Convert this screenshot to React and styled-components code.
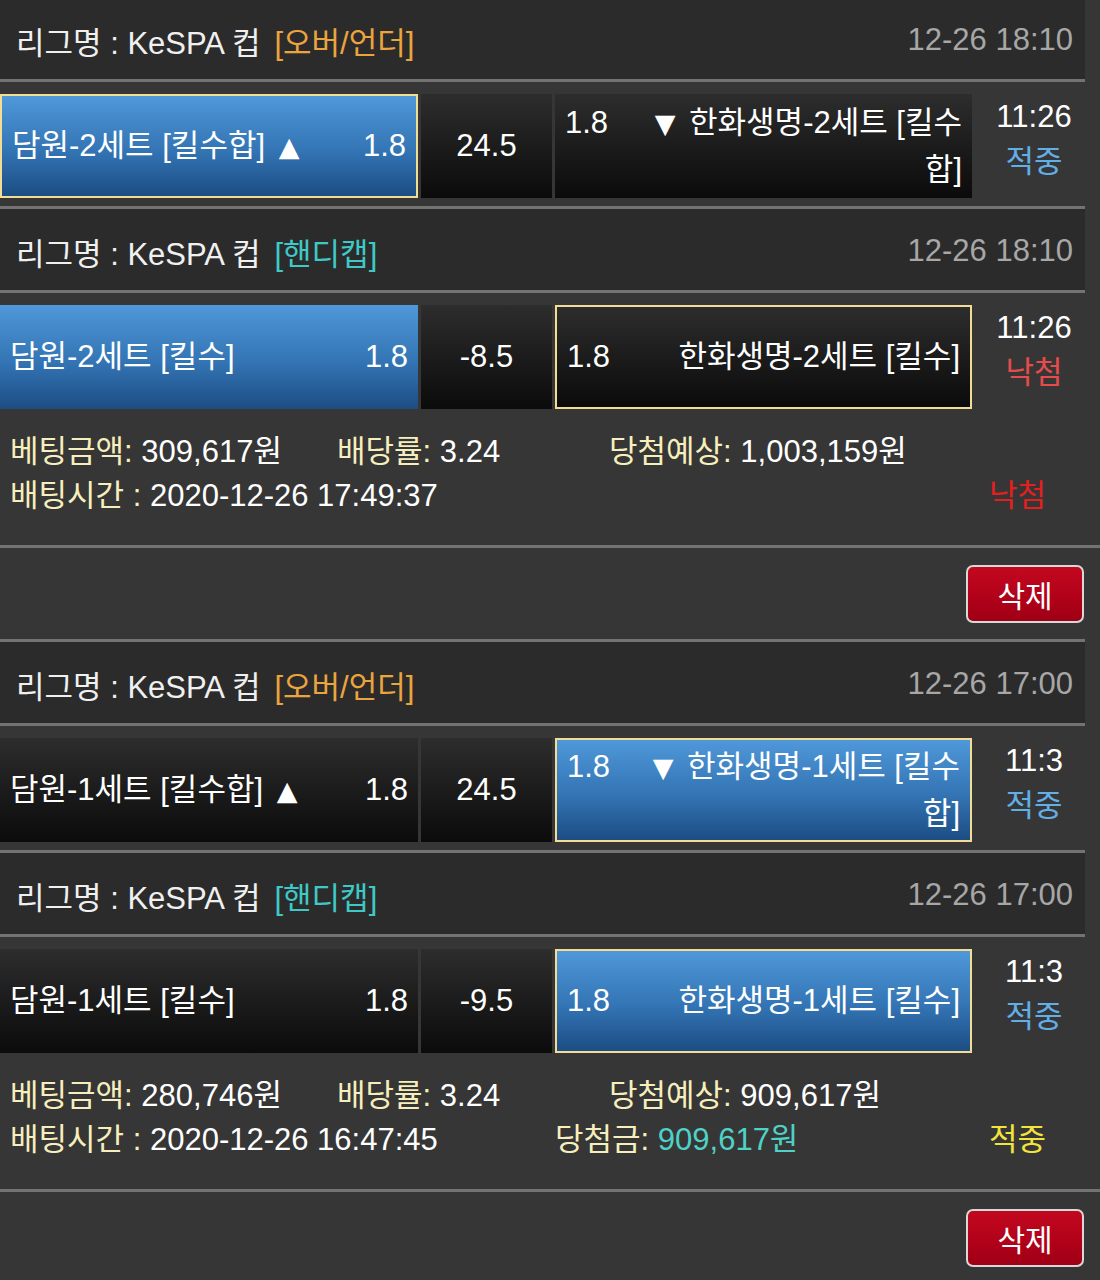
import React from 'react';
import styled, { createGlobalStyle } from 'styled-components';

const GlobalStyle = createGlobalStyle`
  html, body {
    margin: 0;
    padding: 0;
    background: #363636;
  }
  body {
    font-family: "Liberation Sans", "Noto Sans CJK KR", sans-serif;
    color: #f2f2f2;
  }
`

const tones = {
	orange: '#eba43e',
	teal: '#3fc9c6',
	hitBlue: '#62aee6',
	missRed: '#e64c4c',
	yellow: '#f2e43c',
	red: '#e2201f',
	payout: '#4fd2c6',
};

const Page = styled.div`
	width: 1100px;
	margin-top: -5px;
	background: #363636;
	overflow: hidden;
	font-size: 31px;
`

const LeagueHeader = styled.div`
	box-sizing: border-box;
	width: 1085px;
	height: 87px;
	padding: 3px 12px 0 16px;
	display: flex;
	align-items: center;
	justify-content: space-between;
	background: #2b2b2b;
	border-top: 3px solid #737373;
	border-bottom: 3px solid #737373;
	color: #f0f0f0;
	white-space: nowrap;
`

const Market = styled.span`
	margin-left: 14px;
	color: ${(p) => tones[p.$tone]};
`

const GameDate = styled.span`
	color: #a7a7a7;
`

const BetRow = styled.div`
	width: 1085px;
	display: grid;
	grid-template-columns: 418px 131px 417px 1fr;
	column-gap: 3px;
	padding: 12px 0 ${(p) => (p.$last ? '0' : '8px')};
`

const Pick = styled.div`
	box-sizing: border-box;
	height: 104px;
	padding: 0 10px;
	display: flex;
	align-items: center;
	justify-content: ${(p) => (p.$center ? 'center' : 'stretch')};
	border: ${(p) => (p.$picked ? '2px solid #f3dc94' : 'none')};
	background: ${(p) =>
		p.$active
			? 'linear-gradient(180deg, #4f98d9 0%, #3374b4 55%, #1c4d84 100%)'
			: 'linear-gradient(180deg, #2d2d2d 0%, #1a1a1a 55%, #0b0b0b 100%)'};
	line-height: 46px;
	color: #fff;
`

const PickBody = styled.div`
	flex: 1;
	display: flex;
	align-items: flex-start;
	justify-content: space-between;
`

const TeamName = styled.span`
	max-width: 322px;
	text-align: ${(p) => (p.$right ? 'right' : 'left')};
`

const Arrow = styled.span`
	font-family: "DejaVu Sans", sans-serif;
	font-size: 27px;
	margin: ${(p) => (p.$before ? '0 5px 0 0' : '0 0 0 5px')};
`

const Status = styled.div`
	align-self: start;
	padding-left: 8px;
	display: flex;
	flex-direction: column;
	align-items: center;
	line-height: 45px;
	color: #fff;
`

const Result = styled.span`
	color: ${(p) => tones[p.$tone]};
`

const Info = styled.div`
	padding: 21px 0 27px 10px;
	border-bottom: 3px solid #737373;
	line-height: 44px;
`

const InfoLine = styled.div`
	display: flex;
	align-items: center;
	white-space: nowrap;
`

const Field = styled.div`
	width: ${(p) => (p.$w ? `${p.$w}px` : 'auto')};
`

const Label = styled.span`
	color: #f6efbd;
`

const Value = styled.span`
	color: ${(p) => (p.$tone ? tones[p.$tone] : '#ffffff')};
`

const Verdict = styled.span`
	margin-left: auto;
	margin-right: 54px;
	color: ${(p) => tones[p.$tone]};
`

const Actions = styled.div`
	width: 1085px;
	box-sizing: border-box;
	padding: 17px 1px 16px 0;
	display: flex;
	justify-content: flex-end;
`

const DeleteButton = styled.button`
	width: 118px;
	height: 58px;
	padding: 0;
	background: linear-gradient(180deg, #c2081f 0%, #b00119 60%, #9e0015 100%);
	border: 2px solid #d8d8d8;
	border-radius: 7px;
	color: #fff;
	font-family: inherit;
	font-size: 30px;
	cursor: pointer;
`

const tickets = [
	{
		games: [
			{
				market: '[오버/언더]', tone: 'orange', date: '12-26 18:10',
				home: { name: '담원-2세트 [킬수합]', arrow: '▲', odds: '1.8', active: true, picked: true },
				line: '24.5',
				away: { name: '한화생명-2세트 [킬수합]', arrow: '▼', odds: '1.8' },
				time: '11:26', result: '적중', resultTone: 'hitBlue',
			},
			{
				market: '[핸디캡]', tone: 'teal', date: '12-26 18:10',
				home: { name: '담원-2세트 [킬수]', odds: '1.8', active: true },
				line: '-8.5',
				away: { name: '한화생명-2세트 [킬수]', odds: '1.8', picked: true },
				time: '11:26', result: '낙첨', resultTone: 'missRed',
			},
		],
		stake: '309,617원', rate: '3.24', expected: '1,003,159원',
		placedAt: '2020-12-26 17:49:37', payout: null,
		verdict: '낙첨', verdictTone: 'red',
	},
	{
		games: [
			{
				market: '[오버/언더]', tone: 'orange', date: '12-26 17:00',
				home: { name: '담원-1세트 [킬수합]', arrow: '▲', odds: '1.8' },
				line: '24.5',
				away: { name: '한화생명-1세트 [킬수합]', arrow: '▼', odds: '1.8', active: true, picked: true },
				time: '11:3', result: '적중', resultTone: 'hitBlue',
			},
			{
				market: '[핸디캡]', tone: 'teal', date: '12-26 17:00',
				home: { name: '담원-1세트 [킬수]', odds: '1.8' },
				line: '-9.5',
				away: { name: '한화생명-1세트 [킬수]', odds: '1.8', active: true, picked: true },
				time: '11:3', result: '적중', resultTone: 'hitBlue',
			},
		],
		stake: '280,746원', rate: '3.24', expected: '909,617원',
		placedAt: '2020-12-26 16:47:45', payout: '909,617원',
		verdict: '적중', verdictTone: 'yellow',
	},
];

const Game = ({ game, last }) => (
	<>
		<LeagueHeader>
			<span>
				리그명 : KeSPA 컵<Market $tone={game.tone}>{game.market}</Market>
			</span>
			<GameDate>{game.date}</GameDate>
		</LeagueHeader>
		<BetRow $last={last}>
			<Pick $active={game.home.active} $picked={game.home.picked}>
				<PickBody>
					<TeamName>
						{game.home.name}
						{game.home.arrow && <> <Arrow>{game.home.arrow}</Arrow></>}
					</TeamName>
					<span>{game.home.odds}</span>
				</PickBody>
			</Pick>
			<Pick $center>{game.line}</Pick>
			<Pick $active={game.away.active} $picked={game.away.picked}>
				<PickBody>
					<span>{game.away.odds}</span>
					<TeamName $right>
						{game.away.arrow && <><Arrow $before>{game.away.arrow}</Arrow> </>}
						{game.away.name}
					</TeamName>
				</PickBody>
			</Pick>
			<Status>
				<span>{game.time}</span>
				<Result $tone={game.resultTone}>{game.result}</Result>
			</Status>
		</BetRow>
	</>
);

const Ticket = ({ ticket }) => (
	<section>
		{ticket.games.map((g, i) => (
			<Game key={i} game={g} last={i === ticket.games.length - 1} />
		))}
		<Info>
			<InfoLine>
				<Field $w={327}><Label>베팅금액:</Label> <Value>{ticket.stake}</Value></Field>
				<Field $w={272}><Label>배당률:</Label> <Value>{ticket.rate}</Value></Field>
				<Field><Label>당첨예상:</Label> <Value>{ticket.expected}</Value></Field>
			</InfoLine>
			<InfoLine>
				<Field $w={545}><Label>배팅시간 :</Label> <Value>{ticket.placedAt}</Value></Field>
				{ticket.payout && (
					<Field><Label>당첨금:</Label> <Value $tone="payout">{ticket.payout}</Value></Field>
				)}
				<Verdict $tone={ticket.verdictTone}>{ticket.verdict}</Verdict>
			</InfoLine>
		</Info>
		<Actions>
			<DeleteButton>삭제</DeleteButton>
		</Actions>
	</section>
);

const App = () => {
	return (
		<Page>
			<GlobalStyle />
			{tickets.map((t, i) => (
				<Ticket key={i} ticket={t} />
			))}
		</Page>
	);
};

export default App;
